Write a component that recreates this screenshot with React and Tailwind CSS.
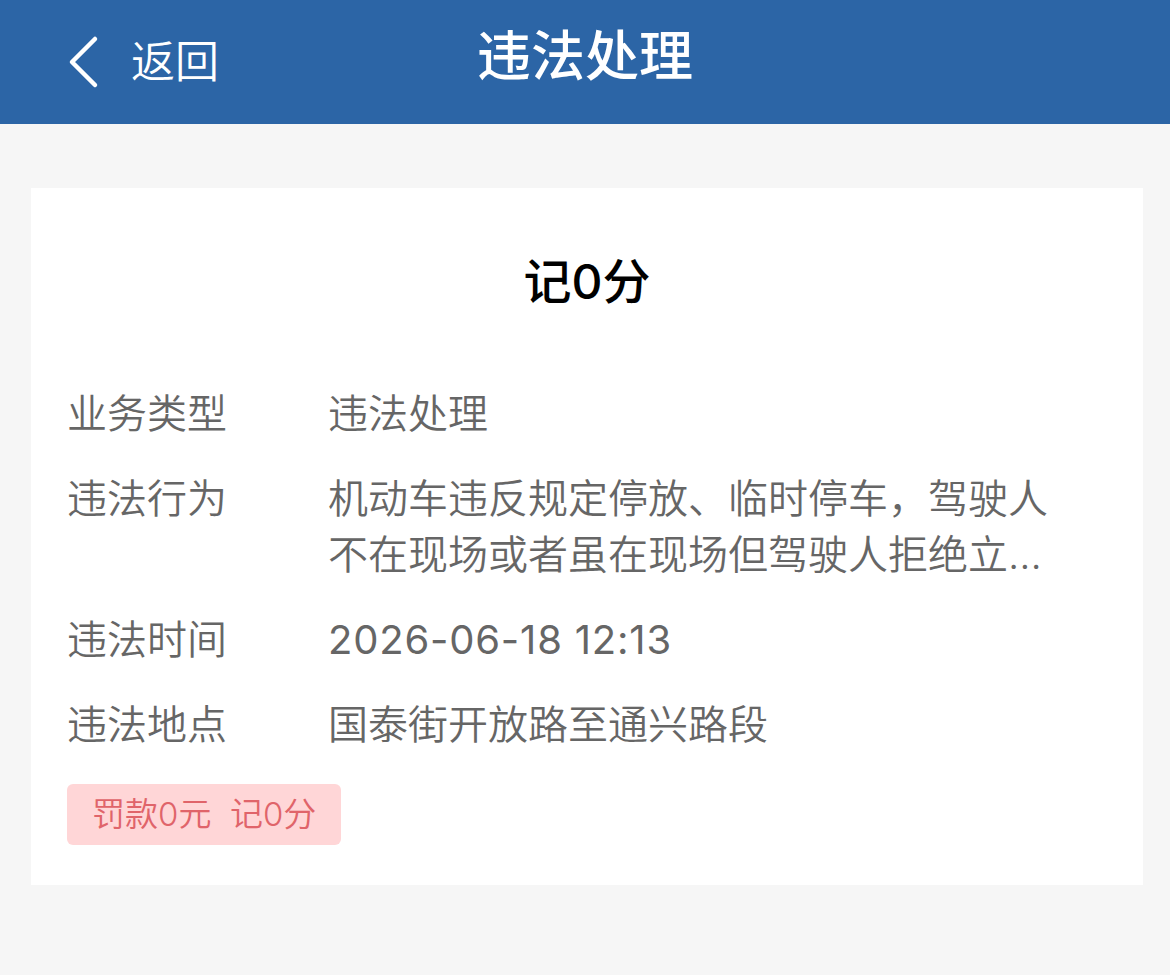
import React from "react";

const rows = [
  { label: "业务类型", value: "违法处理" },
  {
    label: "违法行为",
    value: "机动车违反规定停放、临时停车，驾驶人不在现场或者虽在现场但驾驶人拒绝立...",
  },
  { label: "违法时间", value: "2026-06-18 12:13", digits: true },
  { label: "违法地点", value: "国泰街开放路至通兴路段" },
];

function BackChevron() {
  return (
    <svg width="32" height="54" viewBox="0 0 32 54" fill="none">
      <path
        d="M28 4 L5 27 L28 50"
        stroke="white"
        strokeWidth="4.5"
        strokeLinecap="round"
        strokeLinejoin="round"
      />
    </svg>
  );
}

export default function App() {
  return (
    <div
      className="min-h-[975px] w-[1170px] bg-[#f6f6f6]"
      style={{ fontFamily: 'Inter, "Noto Sans CJK SC", sans-serif' }}
    >
      <header className="grid h-[124px] grid-cols-[1fr_auto_1fr] items-center bg-[#2c65a6]">
        <div className="flex items-center pl-[67px]">
          <BackChevron />
          <span className="ml-[32px] text-[44px] font-[350] leading-none text-white">返回</span>
        </div>
        <h1 className="mt-[-10px] text-[54px] font-medium leading-none text-white">违法处理</h1>
        <div />
      </header>

      <main className="pt-[64px] pl-[31px]">
        <section className="w-[1112px] bg-white pt-[62px] pr-[36px] pb-[40px] pl-[36px]">
          <h2 className="text-center text-[48px] font-medium leading-[64px] text-black">记0分</h2>

          <dl className="mt-[72px] flex flex-col gap-[29px]">
            {rows.map((row) => (
              <div key={row.label} className="flex text-[40px] font-[350] leading-[56px] text-[#666666]">
                <dt className="w-[261px] shrink-0">{row.label}</dt>
                <dd className={row.digits ? "w-[740px] font-normal tracking-[0.8px]" : "w-[740px]"}>
                  {row.value}
                </dd>
              </div>
            ))}
          </dl>

          <div className="mt-[31px] inline-flex h-[61px] items-center rounded-[6px] bg-[#ffd6d7] px-[25px] text-[33px] font-[350] leading-none text-[#e0646a]">
            罚款0元&nbsp;&nbsp;记0分
          </div>
        </section>
      </main>
    </div>
  );
}
